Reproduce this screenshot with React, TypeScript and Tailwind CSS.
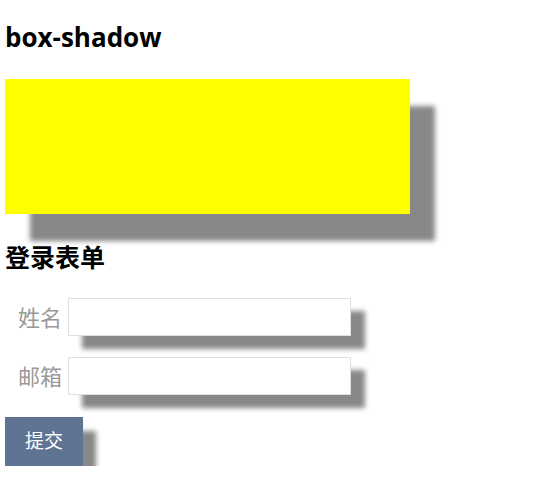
export default function App() {
  return (
    <div className="bg-white px-[5px] pt-[20px] font-['Open_Sans','Noto_Sans_CJK_SC',sans-serif] text-black">
      <h2 className="text-[26px] font-bold leading-[34px]">box-shadow</h2>
      <div className="mt-[25px] h-[135px] w-[405px] bg-[#ffff00] shadow-[25px_27px_5px_#888888]" />
      <h3 className="mt-[27px] text-[25px] font-bold leading-[32px]">登录表单</h3>
      <form className="mt-[25px] flex flex-col">
        <div className="flex items-center gap-[6px] pl-[13px]">
          <label className="text-[22px] leading-[30px] text-[#999999]">姓名</label>
          <input className="h-[38px] w-[283px] border border-[#e0e0e0] bg-white shadow-[14px_13px_5px_#888888] outline-none" />
        </div>
        <div className="mt-[21px] flex items-center gap-[6px] pl-[13px]">
          <label className="text-[22px] leading-[30px] text-[#999999]">邮箱</label>
          <input className="h-[38px] w-[283px] border border-[#e0e0e0] bg-white shadow-[14px_13px_5px_#888888] outline-none" />
        </div>
        <div className="mt-[22px]">
          <button type="button" className="h-[49px] w-[78px] bg-[#5f7393] text-[19px] text-white shadow-[13px_14px_5px_#888888]">
            提交
          </button>
        </div>
      </form>
    </div>
  );
}
